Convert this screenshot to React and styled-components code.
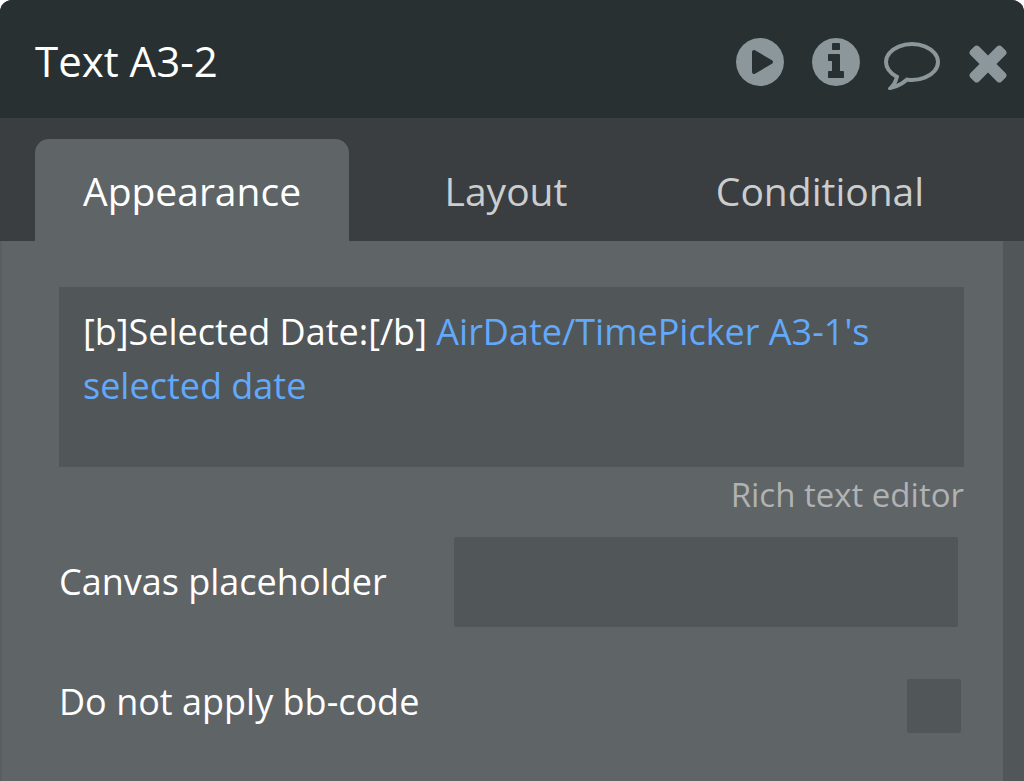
import React, { useState } from "react";
import styled, { createGlobalStyle } from "styled-components";

const ICONS = {
  play: "M896 128q209 0 385.5 103t279.5 279.5 103 385.5-103 385.5-279.5 279.5-385.5 103-385.5-103-279.5-279.5-103-385.5 103-385.5 279.5-279.5 385.5-103zm384 823q32-18 32-55t-32-55l-544-320q-31-19-64-1-32 19-32 56v640q0 37 32 56 16 8 32 8 17 0 32-9z",
  info: "M1152 1376v-160q0-14-9-23t-23-9h-96v-512q0-14-9-23t-23-9h-320q-14 0-23 9t-9 23v160q0 14 9 23t23 9h96v320h-96q-14 0-23 9t-9 23v160q0 14 9 23t23 9h448q14 0 23-9t9-23zm-128-896v-160q0-14-9-23t-23-9h-192q-14 0-23 9t-9 23v160q0 14 9 23t23 9h192q14 0 23-9t9-23zm640 416q0 209-103 385.5t-279.5 279.5-385.5 103-385.5-103-279.5-279.5-103-385.5 103-385.5 279.5-279.5 385.5-103 385.5 103 279.5 279.5 103 385.5z",
  comment:
    "M896 384q-204 0-381.5 69.5t-282 187.5-104.5 255q0 112 71.5 213.5t201.5 175.5l87 50-27 96q-24 91-70 172 152-63 275-171l43-38 57 6q69 8 130 8 204 0 381.5-69.5t282-187.5 104.5-255-104.5-255-282-187.5-381.5-69.5zm896 512q0 174-120 321.5t-326 233-450 85.5q-70 0-145-8-198 175-460 242-49 14-114 22h-5q-15 0-27-10.5t-16-27.5v-1q-3-4-.5-12t2-10 4.5-9.5l6-9 7-8.5 8-9q7-8 31-34.5t34.5-38 31-39.5 32.5-51 27-59 26-76q-157-89-247.5-220t-90.5-281q0-174 120-321.5t326-233 450-85.5 450 85.5 326 233 120 321.5z",
  close:
    "M1490 1322q0 40-28 68l-136 136q-28 28-68 28t-68-28l-294-294-294 294q-28 28-68 28t-68-28l-136-136q-28-28-28-68t28-68l294-294-294-294q-28-28-28-68t28-68l136-136q28-28 68-28t68 28l294 294 294-294q28-28 68-28t68 28l136 136q28 28 28 68t-28 68l-294 294 294 294q28 28 28 68z",
};

const ACTIONS = [
  { icon: "play", label: "Preview" },
  { icon: "info", label: "Reference" },
  { icon: "comment", label: "Comment" },
  { icon: "close", label: "Close" },
];

const TABS = ["Appearance", "Layout", "Conditional"];

const App = () => {
  const [tab, setTab] = useState("Appearance");

  return (
    <>
      <GlobalStyle />
      <Panel>
        <Header>
          <Title>Text A3-2</Title>
          <Actions>
            {ACTIONS.map(({ icon, label }) => (
              <IconButton key={icon} type="button" aria-label={label}>
                <svg viewBox="0 0 1792 1792" aria-hidden="true">
                  <path d={ICONS[icon]} />
                </svg>
              </IconButton>
            ))}
          </Actions>
        </Header>
        <Tabs role="tablist">
          {TABS.map((name) => (
            <Tab
              key={name}
              type="button"
              role="tab"
              aria-selected={tab === name}
              $active={tab === name}
              onClick={() => setTab(name)}
            >
              {name}
            </Tab>
          ))}
        </Tabs>
        <Body>
          <Content>
            <Editor
              role="textbox"
              aria-label="Text"
              aria-multiline="true"
              contentEditable
              suppressContentEditableWarning
              spellCheck={false}
            >
              [b]Selected Date:[/b]{" "}
              <Expression>AirDate/TimePicker A3-1's selected date</Expression>
            </Editor>
            <EditorLink href="#rich-text">Rich text editor</EditorLink>
            <Row>
              <Label htmlFor="placeholder">Canvas placeholder</Label>
              <Input id="placeholder" type="text" />
            </Row>
            <Row>
              <Label htmlFor="bbcode">Do not apply bb-code</Label>
              <Checkbox id="bbcode" type="checkbox" />
            </Row>
          </Content>
          <ScrollTrack />
        </Body>
      </Panel>
    </>
  );
};

const GlobalStyle = createGlobalStyle`
  * {
    box-sizing: border-box;
  }
  body {
    margin: 0;
    background: #fff;
    font-family: "Open Sans", "Noto Sans", sans-serif;
    font-weight: 500;
  }
  button, input {
    font-family: inherit;
    font-weight: inherit;
  }
`;

const Panel = styled.main`
  display: flex;
  flex-direction: column;
  min-height: 100vh;
  border-radius: 12px 12px 0 0;
  overflow: hidden;
  background: #3a3e40;
`;

const Header = styled.header`
  display: flex;
  align-items: flex-start;
  justify-content: space-between;
  height: 118px;
  padding: 34px 8px 0 35px;
  background: #283032;
`;

const Title = styled.h1`
  margin: 0;
  font-size: 42px;
  font-weight: 500;
  line-height: 54px;
  color: #fff;
`;

const Actions = styled.div`
  display: flex;
  gap: 20px;
`;

const IconButton = styled.button`
  width: 56px;
  height: 56px;
  padding: 0;
  border: 0;
  background: none;
  cursor: pointer;
  svg {
    display: block;
    width: 100%;
    height: 100%;
    fill: #8b979b;
  }
`;

const Tabs = styled.div`
  display: grid;
  grid-template-columns: repeat(3, 1fr);
  padding: 21px 47px 0 35px;
`;

const Tab = styled.button`
  height: 102px;
  padding: 2px 0 0;
  border: 0;
  border-radius: 14px 14px 0 0;
  font-size: 39px;
  line-height: 54px;
  color: ${(props) => (props.$active ? "#fff" : "#cbcdce")};
  background: ${(props) => (props.$active ? "#5f6467" : "none")};
  cursor: pointer;
`;

const Body = styled.div`
  display: flex;
  flex: 1;
  border-left: 2px solid #595e61;
  background: #5f6467;
`;

const Content = styled.div`
  flex: 1;
  min-width: 0;
  padding: 46px 39px 32px 57px;
`;

const ScrollTrack = styled.div`
  width: 21px;
  background: #515659;
`;

const Editor = styled.div`
  min-height: 180px;
  padding: 18px 24px;
  font-size: 36px;
  line-height: 54px;
  color: #fff;
  background: #515659;
  outline: 0;
`;

const Expression = styled.span`
  color: #62a9fb;
`;

const EditorLink = styled.a`
  display: block;
  width: fit-content;
  margin: 0 0 14px auto;
  font-size: 33px;
  line-height: 56px;
  color: #b0b2b3;
  text-decoration: none;
`;

const Row = styled.div`
  display: flex;
  align-items: flex-start;
  justify-content: space-between;
  min-height: 90px;
  margin-bottom: 30px;
`;

const Label = styled.label`
  flex: 0 0 395px;
  font-size: 36px;
  line-height: 90px;
  color: #fff;
`;

const Input = styled.input`
  flex: 1;
  min-width: 0;
  height: 90px;
  margin-right: 6px;
  padding: 0 24px;
  border: 0;
  border-radius: 2px;
  font-size: 36px;
  color: #fff;
  background: #515659;
`;

const Checkbox = styled.input`
  appearance: none;
  width: 54px;
  height: 54px;
  margin: 22px 3px 0 0;
  border-radius: 2px;
  background: #515659;
  &:checked {
    box-shadow: inset 0 0 0 12px #515659;
    background: #fff;
  }
`;

export default App;
